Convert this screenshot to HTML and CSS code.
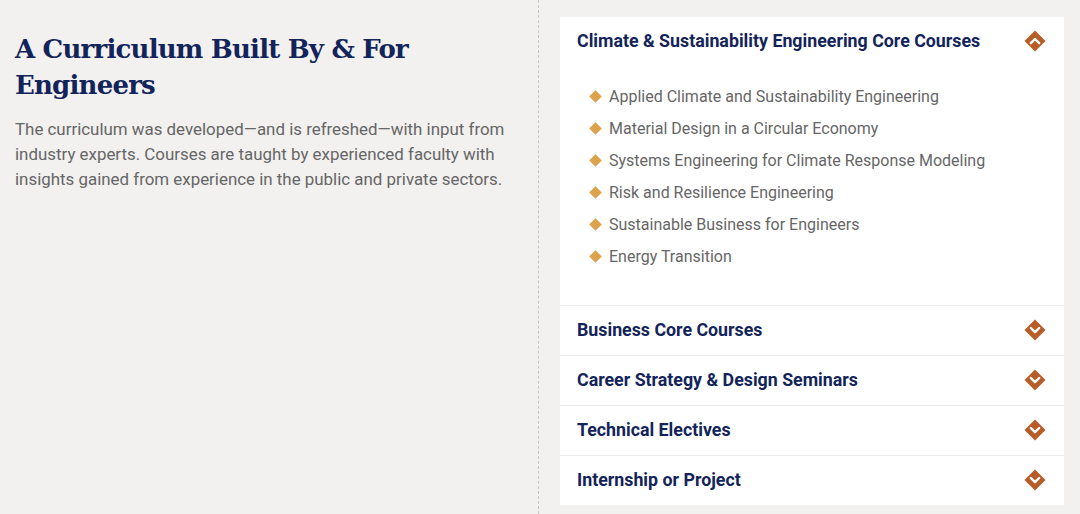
FILE: index.html
```html
<!DOCTYPE html>
<html lang="en">
<head>
<meta charset="utf-8">
<link rel="stylesheet" href="styles.css">
</head>
<body>
<div class="page">
  <section class="intro">
    <h2 class="intro-title">A Curriculum Built By &amp; For Engineers</h2>
    <p class="intro-text">The curriculum was developed—and is refreshed—with input from industry experts. Courses are taught by experienced faculty with insights gained from experience in the public and private sectors.</p>
  </section>
  <section class="courses">
    <div class="accordion">
      <div class="acc-item open">
        <div class="acc-head">
          <span class="acc-title">Climate &amp; Sustainability Engineering Core Courses</span>
          <svg class="acc-icon" viewBox="0 0 24 24" width="24" height="24"><path d="M12 1.5 L22.5 12 L12 22.5 L1.5 12 Z" fill="#b85c28"/><path d="M7.8 14.2 L12 10 L16.2 14.2" fill="none" stroke="#fff" stroke-width="2.4" stroke-linecap="round" stroke-linejoin="round"/></svg>
        </div>
        <ul class="acc-list">
          <li>Applied Climate and Sustainability Engineering</li>
          <li>Material Design in a Circular Economy</li>
          <li>Systems Engineering for Climate Response Modeling</li>
          <li>Risk and Resilience Engineering</li>
          <li>Sustainable Business for Engineers</li>
          <li>Energy Transition</li>
        </ul>
      </div>
      <div class="acc-item">
        <div class="acc-head">
          <span class="acc-title">Business Core Courses</span>
          <svg class="acc-icon" viewBox="0 0 24 24" width="24" height="24"><path d="M12 1.5 L22.5 12 L12 22.5 L1.5 12 Z" fill="#b85c28"/><path d="M7.8 10 L12 14.2 L16.2 10" fill="none" stroke="#fff" stroke-width="2.4" stroke-linecap="round" stroke-linejoin="round"/></svg>
        </div>
      </div>
      <div class="acc-item">
        <div class="acc-head">
          <span class="acc-title">Career Strategy &amp; Design Seminars</span>
          <svg class="acc-icon" viewBox="0 0 24 24" width="24" height="24"><path d="M12 1.5 L22.5 12 L12 22.5 L1.5 12 Z" fill="#b85c28"/><path d="M7.8 10 L12 14.2 L16.2 10" fill="none" stroke="#fff" stroke-width="2.4" stroke-linecap="round" stroke-linejoin="round"/></svg>
        </div>
      </div>
      <div class="acc-item">
        <div class="acc-head">
          <span class="acc-title">Technical Electives</span>
          <svg class="acc-icon" viewBox="0 0 24 24" width="24" height="24"><path d="M12 1.5 L22.5 12 L12 22.5 L1.5 12 Z" fill="#b85c28"/><path d="M7.8 10 L12 14.2 L16.2 10" fill="none" stroke="#fff" stroke-width="2.4" stroke-linecap="round" stroke-linejoin="round"/></svg>
        </div>
      </div>
      <div class="acc-item">
        <div class="acc-head">
          <span class="acc-title">Internship or Project</span>
          <svg class="acc-icon" viewBox="0 0 24 24" width="24" height="24"><path d="M12 1.5 L22.5 12 L12 22.5 L1.5 12 Z" fill="#b85c28"/><path d="M7.8 10 L12 14.2 L16.2 10" fill="none" stroke="#fff" stroke-width="2.4" stroke-linecap="round" stroke-linejoin="round"/></svg>
        </div>
      </div>
    </div>
  </section>
</div>
</body>
</html>
```

FILE: styles.css
```css
* { box-sizing: border-box; }
html, body { margin: 0; padding: 0; }
body {
  background: #f2f1f0;
  font-family: Roboto, "Liberation Sans", sans-serif;
  width: 1080px;
  height: 514px;
  overflow: hidden;
}
.page {
  display: flex;
  height: 514px;
}
.intro {
  width: 539px;
  padding: 31px 20px 0 15px;
  border-right: 1px dashed #c9c7c5;
}
.intro-title {
  margin: 0;
  font-family: "DejaVu Serif", serif;
  font-weight: bold;
  font-size: 26px;
  line-height: 36px;
  color: #13245a;
  letter-spacing: -0.8px;
}
.intro-text {
  margin: 14px 0 0;
  font-size: 16.9px;
  line-height: 25px;
  color: #666;
}
.courses {
  flex: 1;
  padding: 17px 16px 0 21px;
}
.accordion {
  display: flex;
  flex-direction: column;
  gap: 1px;
  background: #ebebeb;
}
.acc-item {
  background: #fff;
}
.acc-head {
  height: 49px;
  display: flex;
  align-items: center;
  justify-content: space-between;
  padding: 0 17px 2px 17px;
}
.acc-title {
  font-weight: bold;
  font-size: 17.8px;
  color: #13245a;
}
.acc-icon { display: block; }
.acc-list {
  list-style: none;
  margin: 0;
  padding: 15px 0 32px 49px;
}
.acc-list li {
  position: relative;
  font-size: 16px;
  line-height: 32px;
  color: #666;
}
.acc-list li::before {
  content: "";
  position: absolute;
  left: -18px;
  top: 11px;
  width: 9px;
  height: 9px;
  background: #dca24e;
  transform: rotate(45deg);
}
```
